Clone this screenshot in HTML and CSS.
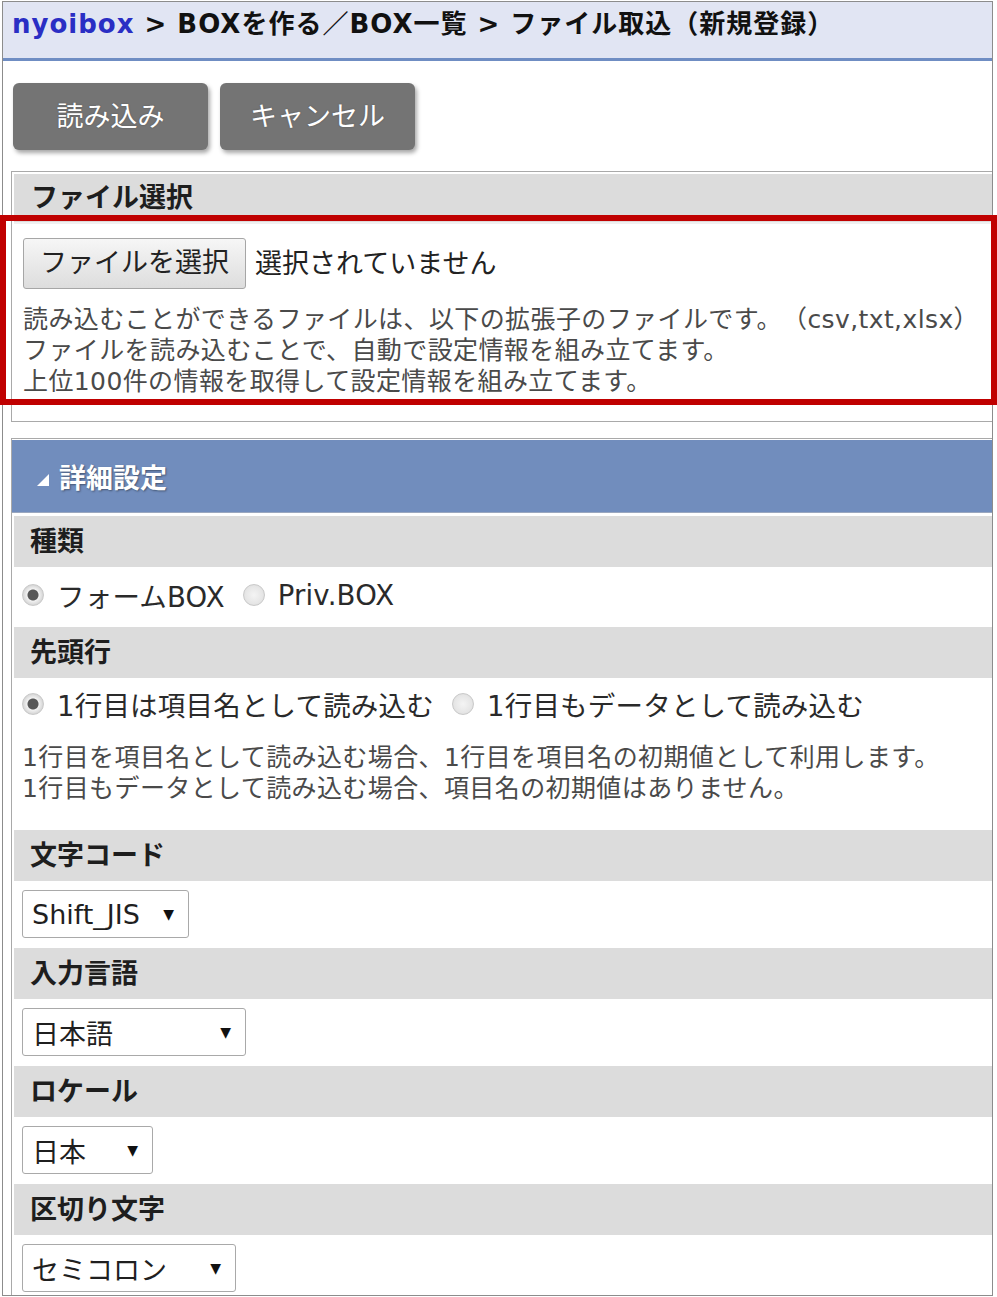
FILE: index.html
```html
<!DOCTYPE html>
<html lang="ja">
<head>
<meta charset="utf-8">
<title>ファイル取込（新規登録）</title>
<link rel="stylesheet" href="styles.css">
</head>
<body>
<div class="frame">
  <header class="crumb"><span class="home">nyoibox</span> &gt; BOXを作る／BOX一覧 &gt; ファイル取込（新規登録）</header>

  <div class="actions">
    <button class="btn">読み込み</button>
    <button class="btn">キャンセル</button>
  </div>

  <section class="panel file-panel">
    <div class="sub-head first">ファイル選択</div>
    <div class="file-body">
      <div class="file-row">
        <span class="file-btn">ファイルを選択</span>
        <span class="file-none">選択されていません</span>
      </div>
      <p class="note">読み込むことができるファイルは、以下の拡張子のファイルです。（csv,txt,xlsx）<br>ファイルを読み込むことで、自動で設定情報を組み立てます。<br>上位100件の情報を取得して設定情報を組み立てます。</p>
    </div>
  </section>

  <section class="panel detail">
    <div class="detail-head"><span class="tri"></span>詳細設定</div>
    <div class="detail-body">
      <div class="sub-head">種類</div>
      <div class="radio-row">
        <span class="radio checked"></span><span class="rlabel">フォームBOX</span>
        <span class="radio"></span><span class="rlabel">Priv.BOX</span>
      </div>

      <div class="sub-head">先頭行</div>
      <div class="radio-row short">
        <span class="radio checked"></span><span class="rlabel">1行目は項目名として読み込む</span>
        <span class="radio"></span><span class="rlabel">1行目もデータとして読み込む</span>
      </div>
      <p class="note note-head">1行目を項目名として読み込む場合、1行目を項目名の初期値として利用します。<br>1行目もデータとして読み込む場合、項目名の初期値はありません。</p>

      <div class="sub-head">文字コード</div>
      <div class="select-row"><div class="select w-enc"><span>Shift_JIS</span><span class="arrow">▼</span></div></div>

      <div class="sub-head">入力言語</div>
      <div class="select-row"><div class="select w-lang"><span>日本語</span><span class="arrow">▼</span></div></div>

      <div class="sub-head">ロケール</div>
      <div class="select-row"><div class="select w-locale"><span>日本</span><span class="arrow">▼</span></div></div>

      <div class="sub-head">区切り文字</div>
      <div class="select-row"><div class="select w-sep"><span>セミコロン</span><span class="arrow">▼</span></div></div>
    </div>
  </section>
</div>
<div class="annot"></div>
</body>
</html>
```

FILE: styles.css
```css
html, body {
  margin: 0;
  padding: 0;
  background: #fff;
}
body {
  font-family: "DejaVu Sans", "Noto Sans CJK JP", sans-serif;
  text-spacing-trim: space-all;
  color: #333;
  width: 997px;
  height: 1297px;
  position: relative;
  overflow: hidden;
}
.frame {
  margin: 1px 0 0 2px;
  width: 989px;
  height: 1293px;
  border: 1px solid #8c8c8c;
  overflow: hidden;
}

/* breadcrumb */
.crumb {
  height: 59px;
  box-sizing: border-box;
  padding: 3px 0 0 9px;
  line-height: 38px;
  background: #e1e5f3;
  border-bottom: 3px solid #6f8dc3;
  font-size: 26px;
  letter-spacing: 1px;
  font-weight: bold;
  color: #111;
  white-space: nowrap;
}
.crumb .home { color: #2a2ec4; }

/* action buttons */
.actions {
  display: flex;
  gap: 12px;
  padding: 22px 0 0 10px;
}
.btn {
  width: 195px;
  height: 67px;
  border: none;
  border-radius: 6px;
  background: #747474;
  color: #fff;
  font-family: inherit;
  font-size: 27px;
  box-shadow: 2px 3px 4px rgba(0,0,0,0.35);
  text-shadow: 0 0 2px rgba(0,0,0,0.25);
  padding: 0 0 4px;
}

/* panels */
.panel {
  border: 1px solid #a9a9a9;
  margin-left: 8px;
  margin-right: -3px;
}
.file-panel {
  margin-top: 21px;
  padding: 2px;
}
.sub-head {
  height: 51px;
  line-height: 51px;
  background: #dcdcdc;
  padding-left: 16px;
  font-size: 27px;
  font-weight: bold;
  color: #1e1e1e;
}
.sub-head.first {
  height: 48px;
  line-height: 48px;
  padding-left: 17px;
}
.file-body {
  padding: 14px 0 22px 9px;
  border-top: 2px solid #f0f0f0;
}
.file-row {
  display: flex;
  align-items: center;
  gap: 9px;
}
.file-btn {
  width: 223px;
  height: 51px;
  box-sizing: border-box;
  border: 1px solid #a6a6a6;
  border-radius: 3px;
  background: linear-gradient(#f6f6f6, #dddddd);
  font-size: 27px;
  line-height: 47px;
  text-align: center;
  color: #222;
}
.file-none {
  font-size: 27px;
  color: #222;
  padding-bottom: 4px;
}
.note {
  margin: 15px 0 0;
  font-size: 25px;
  letter-spacing: 0.4px;
  line-height: 31px;
  color: #4a4a4a;
  white-space: nowrap;
}

/* detail panel */
.detail {
  margin-top: 16px;
}
.detail-head {
  height: 72px;
  background: #718dbd;
  display: flex;
  align-items: center;
  padding-left: 25px;
  color: #fff;
  font-size: 27px;
  font-weight: bold;
  text-shadow: 1px 1px 2px rgba(0,0,0,0.4);
  border-top: 1px solid #ffffff;
  border-bottom: 1px solid #9aa7bf;
}
.tri {
  width: 0;
  height: 0;
  border-left: 12px solid transparent;
  border-bottom: 12px solid #fff;
  margin: 8px 10px 0 0;
}
.detail-body {
  padding: 3px 0 0 2px;
}
.radio-row {
  height: 60px;
  display: flex;
  align-items: center;
  padding-left: 8px;
  box-sizing: border-box;
  padding-bottom: 4px;
}
.radio-row.short {
  height: 56px;
}
.radio {
  width: 20px;
  height: 20px;
  border-radius: 50%;
  border: 1px solid #c9c9c9;
  background: radial-gradient(circle, #f4f4f4 0%, #e6e6e6 60%, #d4d4d4 100%);
  flex: none;
  position: relative;
  margin-right: 13px;
}
.radio.checked {
  background: radial-gradient(circle, #575757 0, #575757 5px, #f2f2f2 6px, #e4e4e4 8px, #cfcfcf 11px);
}
.rlabel {
  font-size: 27.5px;
  letter-spacing: 0.2px;
  color: #2a2a2a;
  margin-right: 18px;
}
.note-head {
  margin: 8px 0 26px 8px;
}

/* selects */
.select-row {
  height: 67px;
  box-sizing: border-box;
  padding: 9px 0 0 8px;
}
.select {
  height: 48px;
  box-sizing: border-box;
  border: 1px solid #a9a9a9;
  border-radius: 3px;
  background: #fff;
  display: flex;
  align-items: center;
  justify-content: space-between;
  padding: 0 14px 0 9px;
  font-size: 27px;
  color: #1f1f1f;
}
.select .arrow {
  font-size: 14px;
  color: #111;
}
.w-enc { width: 167px; }
.w-lang { width: 224px; }
.w-locale { width: 131px; }
.w-sep { width: 214px; }

/* annotation highlight */
.annot {
  position: absolute;
  left: 0;
  top: 215px;
  width: 997px;
  height: 190px;
  box-sizing: border-box;
  border: 6px solid #c00000;
}
```
